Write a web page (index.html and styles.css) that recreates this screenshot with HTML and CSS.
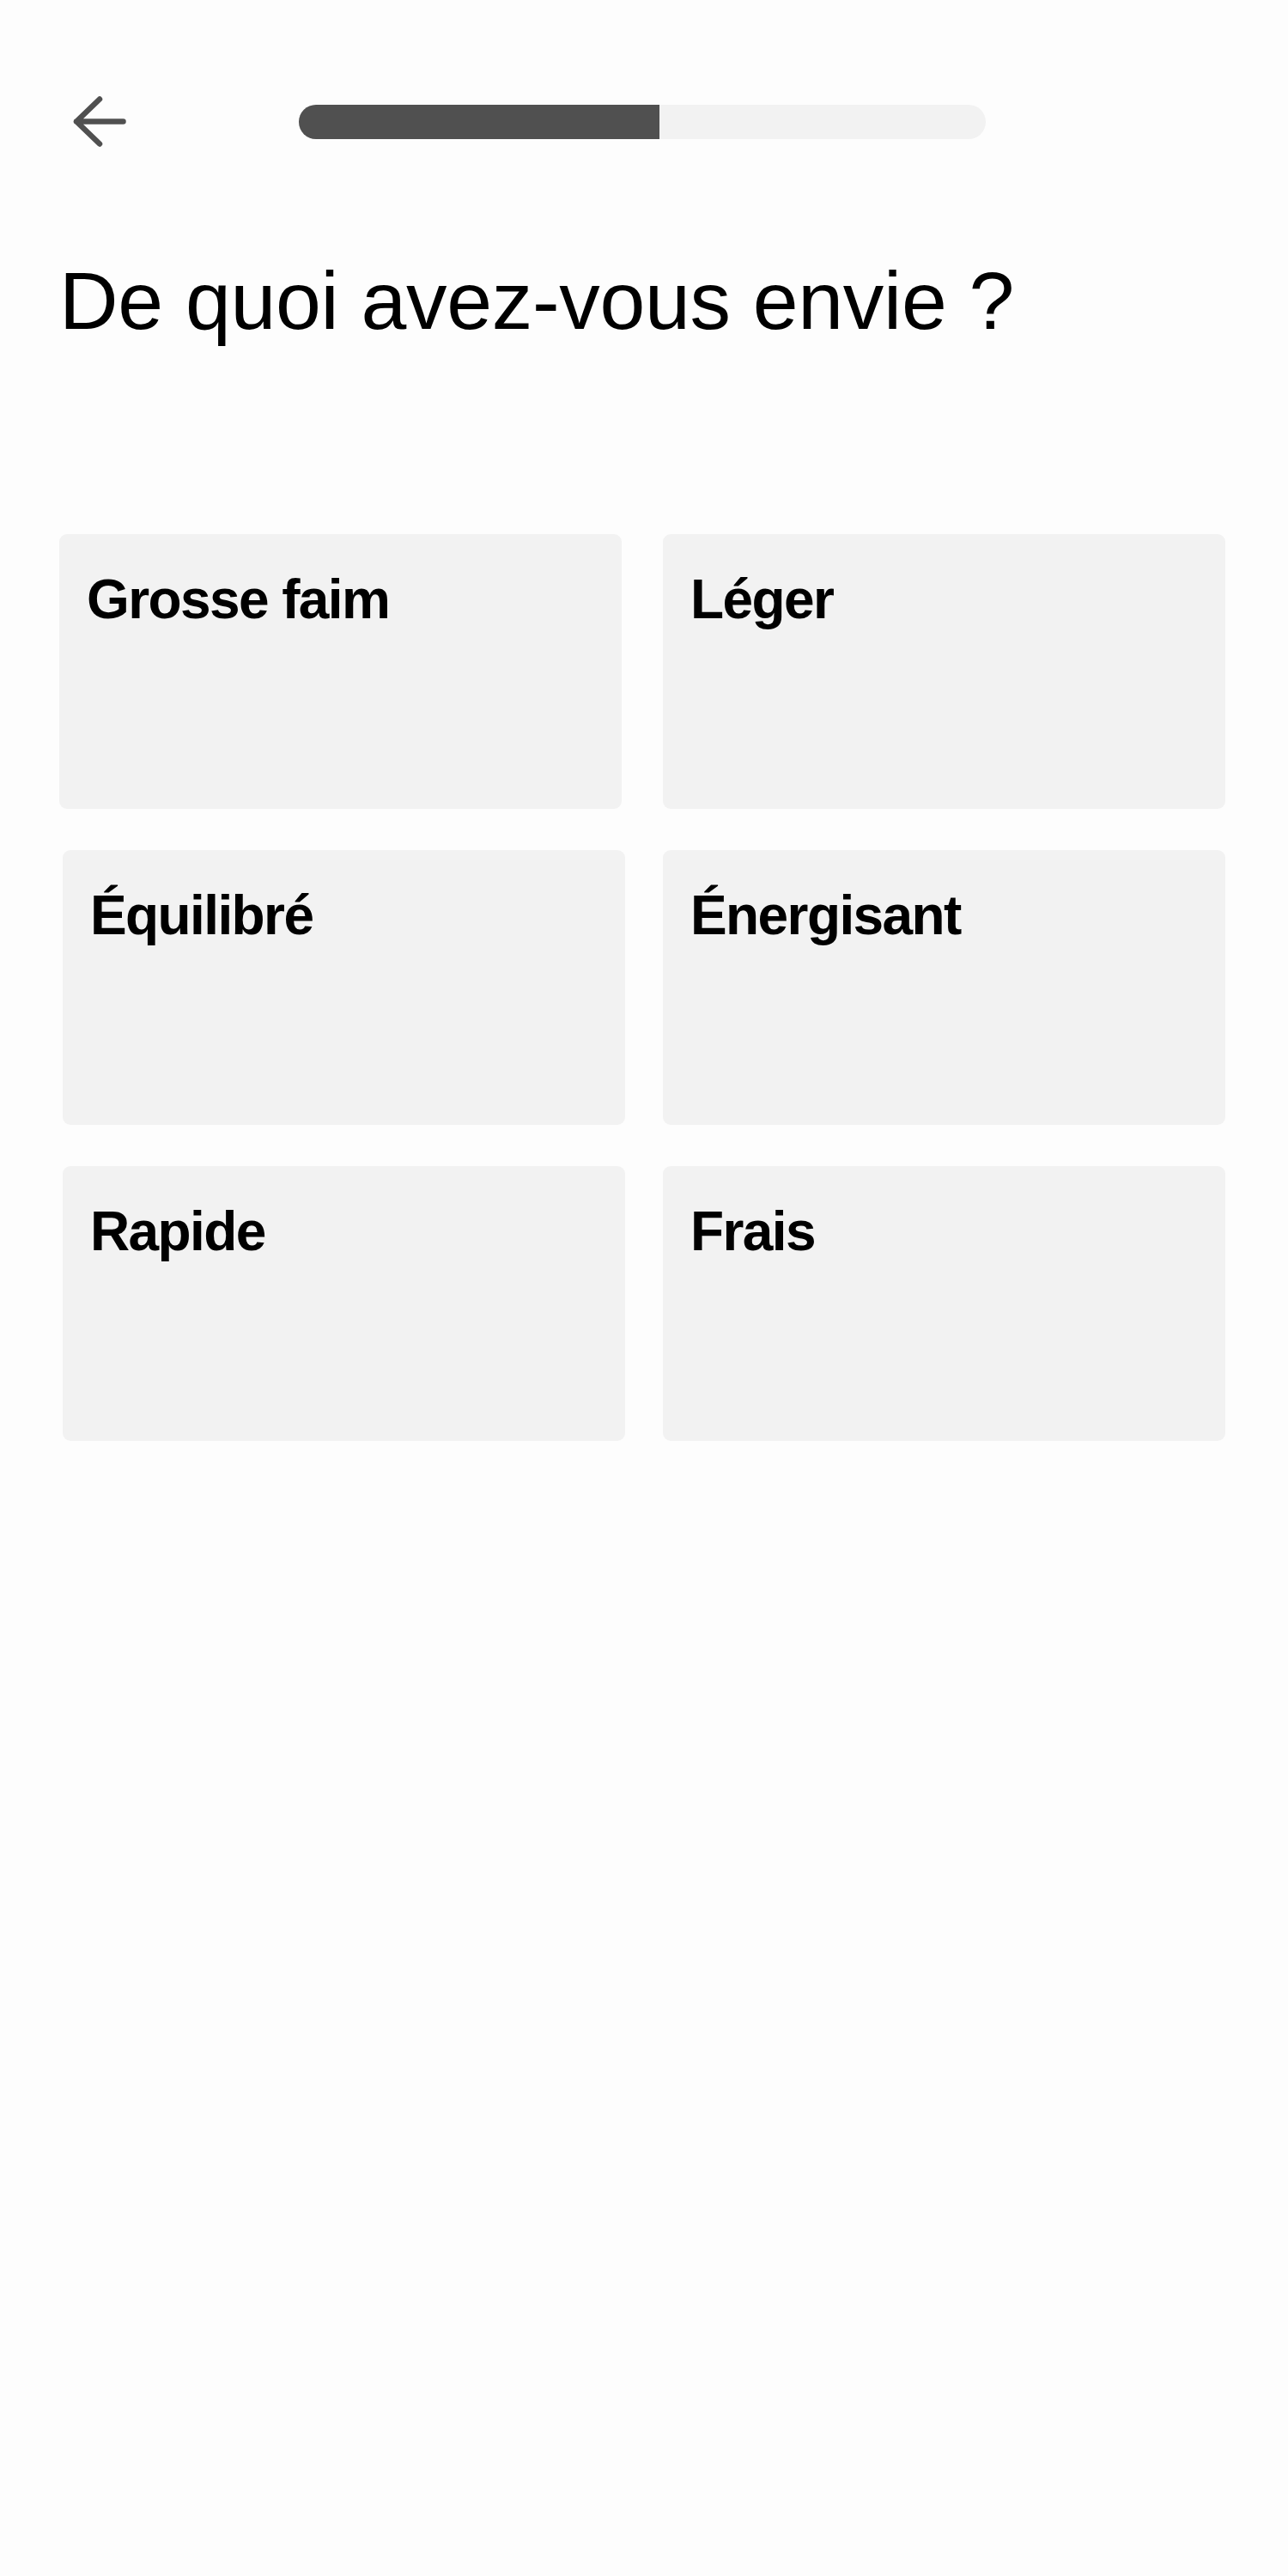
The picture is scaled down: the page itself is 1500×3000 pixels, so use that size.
FILE: index.html
```html
<!DOCTYPE html>
<html lang="fr">
<head>
<meta charset="utf-8">
<title>De quoi avez-vous envie ?</title>
<link rel="stylesheet" href="styles.css">
</head>
<body>
<div class="screen">
  <header class="topbar">
    <button class="back" aria-label="Retour">
      <svg class="back-icon" width="72" height="84" viewBox="0 0 72 84">
        <path d="M36 15.5 L9 41.5 L36 67.5 M9 41.5 L63.5 41.5" fill="none" stroke="#505050" stroke-width="6.5" stroke-linecap="round" stroke-linejoin="round"/>
      </svg>
    </button>
    <div class="progress"><div class="progress-fill" style="width:52.5%"></div></div>
  </header>
  <h1 class="title">De quoi avez-vous envie ?</h1>
  <div class="options">
    <div class="option"><span class="label">Grosse faim</span></div>
    <div class="option"><span class="label">Léger</span></div>
    <div class="option shift"><span class="label">Équilibré</span></div>
    <div class="option"><span class="label">Énergisant</span></div>
    <div class="option shift"><span class="label">Rapide</span></div>
    <div class="option"><span class="label">Frais</span></div>
  </div>
</div>
</body>
</html>
```
FILE: styles.css
```css
html, body {
  margin: 0;
  padding: 0;
  background: #fdfdfd;
}
body {
  font-family: "Liberation Sans", Arial, sans-serif;
  color: #000;
}
.screen {
  width: 1500px;
  min-height: 3000px;
  box-sizing: border-box;
}
.topbar {
  display: flex;
  align-items: center;
  height: 84px;
  margin-top: 100px;
  padding-left: 80px;
}
.back {
  border: 0;
  padding: 0;
  margin: 0;
  background: none;
  width: 72px;
  height: 84px;
  display: block;
}
.back-icon {
  display: block;
}
.progress {
  margin-left: 196px;
  width: 800px;
  height: 40px;
  border-radius: 20px;
  background: #f2f2f2;
  overflow: hidden;
}
.progress-fill {
  height: 100%;
  background: #505050;
}
.title {
  margin: 108px 0 0 69px;
  font-size: 95px;
  line-height: 116px;
  font-weight: 400;
  letter-spacing: -0.3px;
}
.options {
  margin: 214px 0 0 69px;
  width: 1358px;
  display: grid;
  grid-template-columns: 655px 655px;
  grid-auto-rows: 320px;
  column-gap: 48px;
  row-gap: 48px;
}
.option {
  background: #f2f2f2;
  border-radius: 9px;
  padding: 38px 32px 0;
}
.option.shift {
  margin-left: 4px;
  margin-right: -4px;
}
.label {
  display: block;
  font-size: 64px;
  line-height: 76px;
  font-weight: 700;
  letter-spacing: -1.6px;
}
```
